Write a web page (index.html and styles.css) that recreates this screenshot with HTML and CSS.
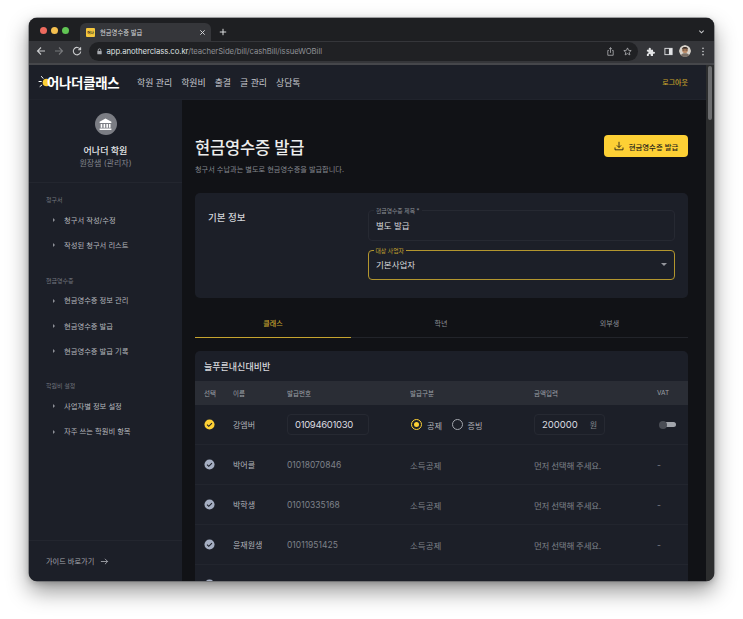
FILE: index.html
```html
<!DOCTYPE html>
<html lang="ko">
<head>
<meta charset="utf-8">
<title>현금영수증 발급</title>
<link rel="stylesheet" href="styles.css">
</head>
<body>
<div class="window">
  <div class="tabstrip">
    <div class="lights"><i class="light red"></i><i class="light amber"></i><i class="light green"></i></div>
    <div class="tab">
      <span class="favicon">어나</span>
      <span class="tab-title">현금영수증 발급</span>
      <svg class="tab-x" viewBox="0 0 8 8"><path d="M1.5 1.5l5 5M6.5 1.5l-5 5"/></svg>
    </div>
    <svg class="tab-plus" viewBox="0 0 10 10"><path d="M5 1v8M1 5h8"/></svg>
    <svg class="tab-chevron" viewBox="0 0 8 8"><path d="M1.5 3l2.5 2.5L6.5 3"/></svg>
  </div>
  <div class="toolbar">
    <svg class="tb-icon" viewBox="0 0 10 10"><path d="M9 5H1.5M5 1.5L1.5 5 5 8.5"/></svg>
    <svg class="tb-icon dim" viewBox="0 0 10 10"><path d="M1 5h7.5M5 1.5L8.5 5 5 8.5"/></svg>
    <svg class="tb-icon" viewBox="0 0 10 10"><path d="M8.3 3.4A3.7 3.7 0 1 0 8.7 5.5M8.6 1.2v2.5H6.1"/></svg>
    <div class="omnibox">
      <svg class="lock" viewBox="0 0 8 8"><path d="M2.5 3.5V2.4a1.5 1.5 0 0 1 3 0v1.1" fill="none" stroke="#a8abb0"/><rect x="1.5" y="3.4" width="5" height="3.8" rx=".6" fill="#a8abb0"/></svg>
      <span class="url"><b>app.anotherclass.co.kr</b>/teacherSide/bill/cashBill/issueWOBill</span>
      <svg class="tb-small" viewBox="0 0 10 10"><path d="M3.2 3.8H2v5.4h6V3.8H6.8M5 6.5V.8M3.4 2.3L5 .8l1.6 1.5"/></svg>
      <svg class="tb-small" viewBox="0 0 10 10"><path d="M5 1l1.2 2.7 2.9.3-2.2 1.9.7 2.9L5 7.3 2.4 8.8l.7-2.9L.9 4l2.9-.3z"/></svg>
    </div>
    <svg class="tb-fill" viewBox="0 0 10 10"><path d="M1 3h2V2a1.2 1.2 0 0 1 2.4 0v1h2.4v2.2h1a1.2 1.2 0 0 1 0 2.4h-1V10H5.3V9a1.1 1.1 0 0 0-2.2 0v1H1V7.4h.6a1.2 1.2 0 0 0 0-2.4H1z"/></svg>
    <svg class="tb-panel" viewBox="0 0 10 10"><rect x="1" y="1.5" width="8" height="7" fill="none" stroke="#e2e3e5"/><rect x="5.5" y="1.5" width="3.5" height="7" fill="#e2e3e5"/></svg>
    <svg class="tb-avatar" viewBox="0 0 12 12"><circle cx="6" cy="6" r="6" fill="#d9d4cc"/><path d="M1.5 10.5C2.5 8.6 4 8.2 6 8.2s3.500.4 4.500 2.300A6 6 0 0 1 1.500 10.500z" fill="#7a6f66"/><circle cx="6" cy="5.200" r="2.800" fill="#b98a68"/><path d="M3 4.500C3 2.500 4.500 2 6 2s3 .5 3 2.500L8 3.800H4z" fill="#3c2f28"/><path d="M3.600 5h1.900M6.500 5h1.900" stroke="#2a2320" stroke-width=".7"/></svg>
    <svg class="tb-dots" viewBox="0 0 4 10"><circle cx="2" cy="1.500" r=".9"/><circle cx="2" cy="5" r=".9"/><circle cx="2" cy="8.500" r=".9"/></svg>
  </div>
  <div class="viewport">
    <div class="app">
      <header class="appbar">
        <div class="logo">
          <svg class="logo-sun" viewBox="0 0 14 14"><circle cx="8.500" cy="7.500" r="3.800" fill="#fdd035"/><path d="M3.500 1.500l1.500 1.800M1 6.500h2.300M2 11.500l1.800-1.400" stroke="#fff" stroke-width="1" stroke-linecap="round"/></svg>
          <span class="logo-text">어나더클래스</span>
        </div>
        <nav class="topnav"><a>학원 관리</a><a>학원비</a><a>출결</a><a>글 관리</a><a>상담톡</a></nav>
        <a class="logout">로그아웃</a>
      </header>
      <div class="columns">
        <aside class="sidebar">
          <div class="profile">
            <span class="avatar">
              <svg viewBox="0 0 14 14"><path d="M7 1.500L1.500 4.500v1h11v-1zM2.500 6.500v3.500h1.500V6.500zM5.200 6.500v3.500h1.500V6.500zM7.800 6.500v3.500h1.500V6.500zM10.200 6.500v3.500h1.500V6.500zM1.500 10.800h11v1.400h-11z" fill="#fff"/></svg>
            </span>
            <strong class="org">어나더 학원</strong>
            <span class="role">원장샘 (관리자)</span>
          </div>
          <div class="menu">
            <section class="menu-group">
              <h4>청구서</h4>
              <a class="menu-item">청구서 작성/수정</a>
              <a class="menu-item">작성된 청구서 리스트</a>
            </section>
            <section class="menu-group">
              <h4>현금영수증</h4>
              <a class="menu-item">현금영수증 정보 관리</a>
              <a class="menu-item">현금영수증 발급</a>
              <a class="menu-item">현금영수증 발급 기록</a>
            </section>
            <section class="menu-group">
              <h4>학원비 설정</h4>
              <a class="menu-item">사업자별 정보 설정</a>
              <a class="menu-item">자주 쓰는 학원비 항목</a>
            </section>
          </div>
          <a class="guide">가이드 바로가기
            <svg viewBox="0 0 10 10"><path d="M1 5h7.500M5.500 2l3 3-3 3"/></svg>
          </a>
        </aside>
        <main class="main">
          <div class="page-head">
            <div>
              <h1>현금영수증 발급</h1>
              <p>청구서 수납과는 별도로 현금영수증을 발급합니다.</p>
            </div>
            <button class="primary">
              <svg viewBox="0 0 10 10"><path d="M5 .8v5.600M2.900 4.400L5 6.500l2.100-2.100M1 6.500v2.300h8V6.500"/></svg>
              현금영수증 발급
            </button>
          </div>
          <section class="info-card">
            <h3>기본 정보</h3>
            <div class="fields">
              <div class="field">
                <span class="field-label">현금영수증 제목 *</span>
                <span class="value">별도 발급</span>
              </div>
              <div class="field focus">
                <span class="field-label">대상 사업자</span>
                <span class="value">기본사업자</span>
                <i class="caret"></i>
              </div>
            </div>
          </section>
          <div class="tabs">
            <a class="tab-link active">클래스</a>
            <a class="tab-link">학년</a>
            <a class="tab-link">외부생</a>
          </div>
          <section class="table-card">
            <h2>늘푸른내신대비반</h2>
            <div class="row head">
              <span>선택</span><span>이름</span><span>발급번호</span><span>발급구분</span><span>금액입력</span><span>VAT</span>
            </div>
            <div class="row selected">
              <svg class="check on" viewBox="0 0 12 12"><circle cx="6" cy="6" r="5.500"/><path d="M3.300 6.200l1.900 1.800 3.500-3.500"/></svg>
              <span class="name">강엠버</span>
              <span class="input phone">01094601030</span>
              <span class="radios">
                <i class="radio on"></i><span>공제</span>
                <i class="radio"></i><span>증빙</span>
              </span>
              <span class="input amount"><span>200000</span><em>원</em></span>
              <span class="toggle"><i></i></span>
            </div>
            <div class="row">
              <svg class="check" viewBox="0 0 12 12"><circle cx="6" cy="6" r="5.500"/><path d="M3.300 6.200l1.900 1.800 3.500-3.500"/></svg>
              <span class="name">박어클</span><span>01018070846</span><span>소득공제</span><span class="msg">먼저 선택해 주세요.</span><span>-</span>
            </div>
            <div class="row">
              <svg class="check" viewBox="0 0 12 12"><circle cx="6" cy="6" r="5.500"/><path d="M3.300 6.200l1.900 1.800 3.500-3.500"/></svg>
              <span class="name">박학생</span><span>01010335168</span><span>소득공제</span><span class="msg">먼저 선택해 주세요.</span><span>-</span>
            </div>
            <div class="row">
              <svg class="check" viewBox="0 0 12 12"><circle cx="6" cy="6" r="5.500"/><path d="M3.300 6.200l1.900 1.800 3.500-3.500"/></svg>
              <span class="name">윤재원생</span><span>01011951425</span><span>소득공제</span><span class="msg">먼저 선택해 주세요.</span><span>-</span>
            </div>
            <div class="row">
              <svg class="check" viewBox="0 0 12 12"><circle cx="6" cy="6" r="5.500"/><path d="M3.300 6.200l1.900 1.800 3.500-3.500"/></svg>
              <span class="name">이서윤</span><span>01012345678</span><span>소득공제</span><span class="msg">먼저 선택해 주세요.</span><span>-</span>
            </div>
          </section>
        </main>
      </div>
    </div>
    <div class="scrollbar"><i></i></div>
  </div>
</div>
</body>
</html>
```
FILE: styles.css
```css
* { box-sizing: border-box; }
html, body { margin: 0; height: 100%; background: #fff; overflow: hidden; }
body { padding: 18px 29px 0; font-family: Inter, "Noto Sans CJK KR", sans-serif; color: #d5d7dc; }
a { color: inherit; text-decoration: none; }
h1, h2, h3, h4, p { margin: 0; }
svg { display: block; flex: none; }

.window {
  width: 685px; height: 563px; border-radius: 8px; overflow: hidden;
  display: flex; flex-direction: column; background: #1e1f22;
  box-shadow: 0 0 0 .5px #55565a, 0 10px 22px rgba(0,0,0,.42), 0 2px 6px rgba(0,0,0,.2);
}

/* browser chrome */
.tabstrip { height: 23px; flex: none; display: flex; align-items: flex-end; background: #1e1f22; padding-left: 11px; }
.lights { display: flex; gap: 4px; align-self: flex-start; margin-top: 8.500px; width: 40px; }
.light { width: 7px; height: 7px; border-radius: 50%; }
.red { background: #ed6a5e; } .amber { background: #f4bf4f; } .green { background: #61c554; }
.tab { width: 131px; height: 18px; background: #35363a; border-radius: 6px 6px 0 0; display: flex; align-items: center; padding: 0 5px 0 6px; }
.favicon { width: 9px; height: 9px; background: #f5c73d; border-radius: 1px; font-size: 3.500px; font-weight: 700; color: #222; display: flex; align-items: center; justify-content: center; flex: none; }
.tab-title { font-size: 6.300px; color: #d8d9db; margin-left: 5px; flex: 1; white-space: nowrap; }
.tab-x { width: 7px; height: 7px; fill: none; stroke: #d5d6d8; stroke-width: 1.100; }
.tab-plus { width: 8px; height: 8px; fill: none; stroke: #e3e4e6; stroke-width: 1.200; margin: 0 0 5px 8px; }
.tab-chevron { width: 7px; height: 7px; fill: none; stroke: #c8c9cb; stroke-width: 1.200; margin: 0 9px 6px auto; }

.toolbar { height: 24px; flex: none; display: flex; align-items: center; background: #35363a; padding: 0 0 2px 7px; border-bottom: 2px solid #46474b; }
.tb-icon { width: 10px; height: 10px; fill: none; stroke: #c9cacc; stroke-width: 1.100; margin-right: 8px; }
.tb-icon.dim { stroke: #77787b; }
.omnibox { width: 549px; height: 19px; margin-left: -1px; border-radius: 10px; background: #202124; display: flex; align-items: center; padding: 0 6px 0 7px; }
.lock { width: 7px; height: 7px; margin-right: 3.500px; }
.url { font-size: 7.750px; color: #8e9094; flex: 1; white-space: nowrap; letter-spacing: -.01em; }
.url b { color: #dfe0e2; font-weight: 400; }
.tb-small { width: 9px; height: 9px; fill: none; stroke: #bfc0c3; stroke-width: .8; margin-left: 8px; }
.tb-fill { width: 9px; height: 9px; fill: #e2e3e5; margin-left: 8px; }
.tb-panel { width: 9px; height: 9px; margin-left: 9px; }
.tb-avatar { width: 12px; height: 12px; margin-left: 6px; border-radius: 50%; }
.tb-dots { width: 4px; height: 9px; fill: #cfd0d2; margin-left: 9.500px; }

/* viewport */
.viewport { flex: 1; min-height: 0; display: flex; }
.app { flex: 1; min-width: 0; display: flex; flex-direction: column; }
.scrollbar { width: 8px; flex: none; background: #2c2d2e; padding: 1px 2px; }
.scrollbar i { display: block; width: 4px; height: 54px; border-radius: 2px; background: #6c6d6f; }

.appbar { height: 35px; flex: none; display: flex; align-items: center; background: #1c1f28; padding: 0 18px 0 9px; border-bottom: 1px solid #20232c; }
.logo { display: flex; align-items: center; width: 99px; }
.logo-sun { width: 14px; height: 14px; margin-right: -5px; }
.logo-text { font-size: 13.400px; font-weight: 700; color: #fff; letter-spacing: -.02em; white-space: nowrap; }
.topnav { display: flex; gap: 9px; font-size: 8.900px; color: #c8cad0; }
.logout { margin-left: auto; font-size: 7px; color: #c5a02b; font-weight: 500; }

.columns { flex: 1; min-height: 0; display: flex; }
.sidebar { width: 153px; flex: none; background: #1c1f28; display: flex; flex-direction: column; }
.profile { height: 83px; flex: none; display: flex; flex-direction: column; align-items: center; padding-top: 13px; border-bottom: 1px solid #23262f; }
.avatar { width: 22px; height: 22px; border-radius: 50%; background: #7b7d84; display: flex; align-items: center; justify-content: center; }
.avatar svg { width: 15px; height: 15px; }
.org { font-size: 9px; font-weight: 500; color: #e9eaec; margin-top: 9px; line-height: 14px; }
.role { font-size: 8px; color: #82858d; line-height: 11px; }
.menu { flex: 1; padding: 12px 0 0 17px; }
.menu-group { margin-bottom: 18px; }
.menu-group h4 { font-size: 6px; font-weight: 400; color: #73767e; line-height: 9px; margin-bottom: 3px; }
.menu-item { display: flex; align-items: center; height: 25.300px; font-size: 7.300px; color: #b5b7bd; padding-left: 18px; position: relative; }
.menu-item::before { content: ""; position: absolute; left: 7px; top: 11px; border-left: 2.500px solid #8d9097; border-top: 2px solid transparent; border-bottom: 2px solid transparent; }
.guide { height: 41px; flex: none; border-top: 1px solid #23262f; display: flex; align-items: center; padding-left: 17px; font-size: 7.200px; color: #a4a6ac; gap: 6px; }
.guide svg { width: 9px; height: 9px; fill: none; stroke: #b0b2b8; stroke-width: .9; }

.main { flex: 1; min-width: 0; background: #111216; padding: 35px 18px 0 13px; overflow: hidden; }
.page-head { display: flex; justify-content: space-between; align-items: flex-start; height: 58px; }
.page-head h1 { font-size: 16.500px; font-weight: 500; color: #eceded; line-height: 26px; letter-spacing: -.01em; }
.page-head p { font-size: 7.200px; color: #84878e; line-height: 10px; margin-top: 4px; }
.primary { width: 84px; height: 22px; border: 0; border-radius: 4px; background: #fdd035; color: #24211a; font: 500 7.400px Inter, "Noto Sans CJK KR", sans-serif; display: flex; align-items: center; justify-content: center; gap: 5px; padding: 0; }
.primary svg { width: 10px; height: 10px; fill: none; stroke: #24211a; stroke-width: .9; }

.info-card { height: 105px; border-radius: 5px; background: #1c1f28; display: flex; padding: 17px 13px 0; }
.info-card h3 { width: 160px; font-size: 9.500px; font-weight: 500; color: #d4d6da; padding-top: 1px; line-height: 14px; }
.fields { flex: 1; display: flex; flex-direction: column; gap: 9px; }
.field { height: 31px; padding: 0 7px; border: 1px solid #262932; border-radius: 4px; display: flex; align-items: center; position: relative; }
.field + .field { height: 30px; }
.field-label { position: absolute; left: 5px; top: -4px; padding: 0 2px; background: #1c1f28; font-size: 5.800px; line-height: 7px; color: #8c8f96; white-space: nowrap; }
.value { font-size: 8.500px; color: #d9dadd; line-height: 12px; }
.field.focus { border: 1.500px solid #b3962e; }
.field.focus .field-label { left: 4.500px; top: -4.500px; color: #c6a42f; }
.caret { position: absolute; right: 7px; top: 12px; border-top: 3px solid #94969c; border-left: 3px solid transparent; border-right: 3px solid transparent; }

.tabs { display: grid; grid-template-columns: 156px 1fr 157px; margin-top: 21px; height: 19px; border-bottom: 1px solid #22242a; }
.tab-link { text-align: center; font-size: 7px; line-height: 10px; color: #8b8e94; height: 18px; }
.tab-link.active { color: #c6a42f; font-weight: 500; height: 19px; border-bottom: 1px solid #c6a42f; }

.table-card { margin-top: 13px; background: #1c1f28; border-radius: 5px 5px 0 0; }
.table-card h2 { height: 30px; font-size: 9px; font-weight: 500; color: #d8d9dd; padding: 0 9px; display: flex; align-items: center; }
.row { display: grid; grid-template-columns: 29px 54px 123px 124px 123px 1fr; align-items: center; height: 40px; padding-left: 9px; border-bottom: 1px solid #22252e; font-size: 8.500px; color: #7e8189; }
.row.head { height: 24px; background: #2a2d35; border-bottom: 0; font-size: 6.500px; color: #9ea0a7; }
.name { color: #b2b4ba; font-size: 8px; }
.msg { letter-spacing: -.03em; }
.check { width: 11px; height: 11px; margin-left: -.5px; }
.check circle { fill: #a5aec2; }
.check path { fill: none; stroke: #1c1f28; stroke-width: 1.200; }
.check.on circle { fill: #fdd035; }
.input { display: flex; align-items: center; height: 21px; border: 1px solid #262932; border-radius: 4px; color: #dcdde0; font-size: 9.500px; padding: 0 7px; }
.phone { width: 82px; letter-spacing: -.035em; }
.amount { width: 71px; justify-content: space-between; }
.amount em { font-style: normal; font-size: 8px; color: #85878e; }
.radios { display: flex; align-items: center; font-size: 8.200px; color: #b2b4ba; margin-left: 1px; }
.radio { width: 11px; height: 11px; border-radius: 50%; border: 1px solid #a3a6ad; margin-right: 5px; position: relative; flex: none; }
.radios span { margin-right: 9.500px; }
.radio.on { border-color: #fdd035; }
.radio.on::after { content: ""; position: absolute; inset: 2px; border-radius: 50%; background: #fdd035; }
.toggle { display: block; width: 14px; height: 5px; border-radius: 3px; background: #a2a5ac; margin-left: 5px; position: relative; }
.toggle i { position: absolute; left: -3px; top: -1.500px; width: 8px; height: 8px; border-radius: 50%; background: #4a4d55; }
```
